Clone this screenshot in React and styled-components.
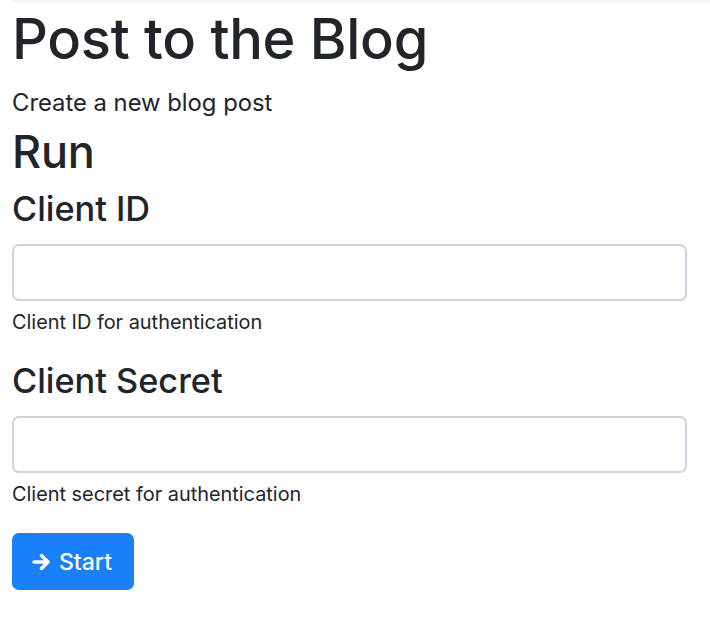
import React from "react";
import styled, { createGlobalStyle } from "styled-components";

const GlobalStyle = createGlobalStyle`
  html, body {
    margin: 0;
    padding: 0;
    background: #ffffff;
  }
  body {
    font-family: Inter, "Noto Sans", "Liberation Sans", sans-serif;
    color: #212529;
    -webkit-font-smoothing: antialiased;
  }
  * {
    box-sizing: border-box;
  }
`;

const TopBar = styled.div`
  height: 3px;
  margin-left: 12px;
  background: #f6f7f8;
`;

const Page = styled.main`
  padding: 3px 23px 40px 12px;
`;

const Title = styled.h1`
  margin: 0;
  font-size: 56px;
  font-weight: 500;
  line-height: 67px;
  letter-spacing: -0.3px;
`;

const Lead = styled.p`
  margin: 13px 0 0;
  font-size: 23.8px;
  line-height: 34px;
`;

const SectionTitle = styled.h2`
  margin: 5px 0 0;
  font-size: 45px;
  font-weight: 500;
  line-height: 54px;
  letter-spacing: -0.2px;
`;

const Form = styled.form`
  display: flex;
  flex-direction: column;
  gap: 24px;
  margin-top: 10px;
`;

const Field = styled.div`
  display: flex;
  flex-direction: column;
`;

const Label = styled.label`
  font-size: 34.3px;
  font-weight: 500;
  line-height: 40px;
  margin-bottom: 15px;
`;

const Input = styled.input`
  width: 100%;
  height: 57px;
  padding: 8px 16px;
  font: inherit;
  font-size: 23px;
  color: #212529;
  background: #fff;
  border: 2px solid #ced4da;
  border-radius: 7px;
  outline: none;
`;

const Help = styled.div`
  margin-top: 6px;
  font-size: 19.9px;
  line-height: 30px;
  color: #212529;
`;

const Button = styled.button`
  align-self: flex-start;
  display: inline-flex;
  align-items: center;
  gap: 9px;
  height: 57px;
  padding: 0 22px 0 20px;
  font-family: inherit;
  font-size: 23px;
  font-weight: 500;
  color: #fff;
  background: #1a80f8;
  border: none;
  border-radius: 7px;
  cursor: pointer;
`;

const ArrowIcon = () => (
  <svg
    width="18"
    height="18"
    viewBox="0 0 18 18"
    fill="none"
    stroke="currentColor"
    strokeWidth="3.4"
    strokeLinecap="round"
    strokeLinejoin="round"
    aria-hidden="true"
  >
    <path d="M2 9h13.5" />
    <path d="M9.5 2.5L16 9l-6.5 6.5" />
  </svg>
);

export default function App() {
  return (
    <>
      <GlobalStyle />
      <TopBar />
      <Page>
        <Title>Post to the Blog</Title>
        <Lead>Create a new blog post</Lead>
        <SectionTitle>Run</SectionTitle>
        <Form onSubmit={(e) => e.preventDefault()}>
          <Field>
            <Label htmlFor="client-id">Client ID</Label>
            <Input id="client-id" type="text" />
            <Help>Client ID for authentication</Help>
          </Field>
          <Field>
            <Label htmlFor="client-secret">Client Secret</Label>
            <Input id="client-secret" type="password" />
            <Help>Client secret for authentication</Help>
          </Field>
          <Button type="submit">
            <ArrowIcon />
            Start
          </Button>
        </Form>
      </Page>
    </>
  );
}
